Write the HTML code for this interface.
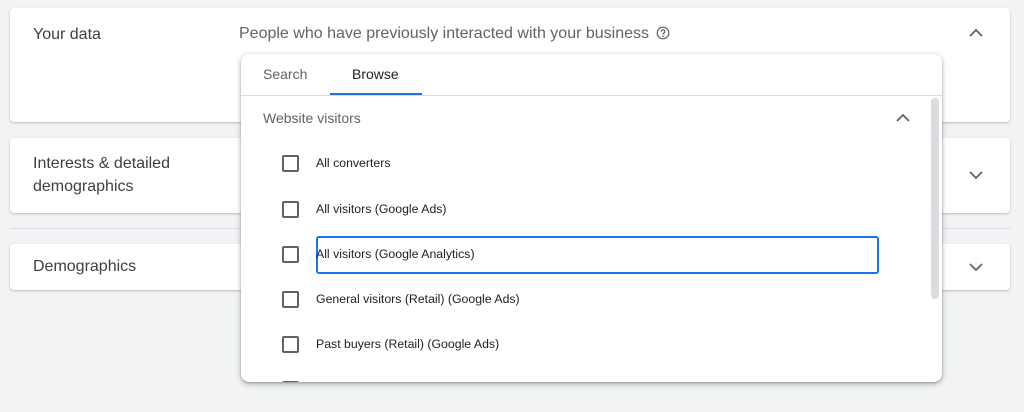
<!DOCTYPE html>
<html><head><style>
*{box-sizing:border-box;margin:0;padding:0}
body{width:1024px;height:412px;background:#f1f3f4;font-family:"Liberation Sans",Arial,sans-serif;position:relative;overflow:hidden;color:#3c4043}
.card{position:absolute;left:10px;width:1000px;background:#fff;border-radius:4px;box-shadow:0 1px 2px rgba(60,64,67,.3)}
.t{position:absolute;left:23px;font-size:16px;color:#3c4043;line-height:23px}
.chev{position:absolute;left:958px}
.pop{position:absolute;left:241px;top:54px;width:701px;height:328px;background:#fff;border-radius:8px;box-shadow:0 2px 6px rgba(60,64,67,.35),0 1px 2px rgba(60,64,67,.3);overflow:hidden}
.cb{position:absolute;left:41px;width:17px;height:17px;border:2px solid #5f6368;border-radius:2px}
.lb{position:absolute;left:75px;font-size:12.3px;color:#202124}
</style></head><body>
<div class="card" style="top:8px;height:114px">
<div class="t" style="top:15px">Your data</div>
<div style="position:absolute;left:229px;top:17px;font-size:16px;color:#5f6368">People who have previously interacted with your business</div>
<svg style="position:absolute;left:646px;top:18px" width="14" height="14" viewBox="0 0 14 14"><circle cx="7" cy="7" r="5.8" fill="none" stroke="#5f6368" stroke-width="1.2"/><path d="M5.2 5.6a1.8 1.8 0 1 1 2.6 1.6c-.6.3-.8.6-.8 1.3" fill="none" stroke="#5f6368" stroke-width="1.2"/><circle cx="7" cy="10.3" r=".8" fill="#5f6368"/></svg>
<svg class="chev" style="top:20px" width="16" height="10" viewBox="0 0 16 10"><path d="M2 8L8 2l6 6" fill="none" stroke="#5f6368" stroke-width="1.8"/></svg>
</div>
<div class="card" style="top:138px;height:75px">
<div class="t" style="top:14px">Interests &amp; detailed<br>demographics</div>
<svg class="chev" style="top:32px" width="16" height="10" viewBox="0 0 16 10"><path d="M2 2l6 6 6-6" fill="none" stroke="#5f6368" stroke-width="1.8"/></svg>
</div>
<div style="position:absolute;left:10px;top:228px;width:1000px;height:1px;background:#dadce0"></div>
<div class="card" style="top:244px;height:46px">
<div class="t" style="top:11px">Demographics</div>
<svg class="chev" style="top:18px" width="16" height="10" viewBox="0 0 16 10"><path d="M2 2l6 6 6-6" fill="none" stroke="#5f6368" stroke-width="1.8"/></svg>
</div>
<div class="pop">
<div style="position:absolute;left:22px;top:12px;font-size:14px;color:#5f6368">Search</div>
<div style="position:absolute;left:111px;top:12px;font-size:14px;color:#202124">Browse</div>
<div style="position:absolute;left:89px;top:39px;width:92px;height:2px;background:#1a73e8"></div>
<div style="position:absolute;left:0;top:41px;width:701px;height:1px;background:#dadce0"></div>
<div style="position:absolute;left:22px;top:56px;font-size:14px;color:#5f6368">Website visitors</div>
<svg style="position:absolute;left:654px;top:59px" width="16" height="10" viewBox="0 0 16 10"><path d="M2 8L8 2l6 6" fill="none" stroke="#5f6368" stroke-width="1.8"/></svg>
<div style="position:absolute;left:690px;top:44px;width:8px;height:201px;background:#dadce0;border-radius:4px"></div>
<div class="cb" style="top:101px"></div><div class="lb" style="top:102px">All converters</div>
<div class="cb" style="top:147px"></div><div class="lb" style="top:148px">All visitors (Google Ads)</div>
<div style="position:absolute;left:75px;top:182px;width:563px;height:38px;border:2px solid #1a73e8;border-radius:3px"></div>
<div class="cb" style="top:192px"></div><div class="lb" style="top:193px">All visitors (Google Analytics)</div>
<div class="cb" style="top:237px"></div><div class="lb" style="top:238px">General visitors (Retail) (Google Ads)</div>
<div class="cb" style="top:282px"></div><div class="lb" style="top:283px">Past buyers (Retail) (Google Ads)</div>
<div class="cb" style="top:327px"></div>
</div>
</body></html>
